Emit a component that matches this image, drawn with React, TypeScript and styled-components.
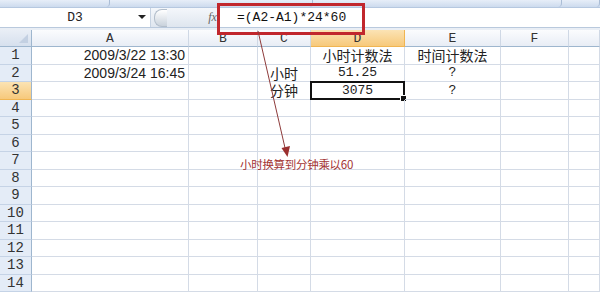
import React from "react";
import styled, { createGlobalStyle } from "styled-components";

const GlobalStyle = createGlobalStyle`
  html, body { margin: 0; padding: 0; background: #ffffff; }
  body { width: 600px; height: 292px; overflow: hidden; font-family: "Liberation Sans", "Noto Sans CJK SC", sans-serif; }
`;

const Page = styled.div`
  position: relative;
  width: 600px;
  height: 292px;
  display: flex;
  flex-direction: column;
  background: #ffffff;
  overflow: hidden;
`;

const Ribbon = styled.div`
  height: 8px;
  display: flex;
  background: linear-gradient(#e7eef8, #cddbee);
  border-bottom: 1px solid #b6c8e0;
  box-sizing: border-box;
`;

const RibbonSeg = styled.div<{ $w: number }>`
  width: ${(p) => p.$w}px;
  border-right: 1px solid #aabdd6;
  border-radius: 0 0 4px 4px;
  box-sizing: border-box;
`;

const FormulaBar = styled.div`
  height: 20px;
  display: flex;
  align-items: stretch;
  background: #ffffff;
  border-bottom: 1px solid #b9c9dd;
  box-sizing: border-box;
`;

const NameBox = styled.div`
  width: 150px;
  display: flex;
  align-items: center;
  justify-content: center;
  position: relative;
  font-family: "Liberation Mono", monospace;
  font-size: 13px;
  color: #222;
`;

const DropArrow = styled.span`
  position: absolute;
  right: 4px;
  top: 7px;
  width: 0;
  height: 0;
  border-left: 4px solid transparent;
  border-right: 4px solid transparent;
  border-top: 4px solid #222;
`;

const GripArea = styled.div`
  width: 55px;
  display: flex;
  align-items: center;
  background: linear-gradient(#f4f7fb, #dfe6ef);
  border-left: 1px solid #c7d3e2;
`;

const Grip = styled.div`
  width: 12px;
  height: 16px;
  margin-left: 3px;
  border-radius: 8px 0 0 8px;
  background: linear-gradient(#ffffff, #c9d2dc);
  border: 1px solid #b3becb;
  border-right: none;
`;

const Fx = styled.div`
  width: 13px;
  display: flex;
  align-items: center;
  justify-content: center;
  font-family: "Liberation Serif", serif;
  font-style: italic;
  font-size: 12px;
  color: #666;
  background: linear-gradient(#f4f7fb, #dfe6ef);
`;

const FormulaInput = styled.div`
  flex: 1;
  display: flex;
  align-items: center;
  padding-left: 17px;
  border-left: 1px solid #b9c9dd;
  font-family: "Liberation Mono", monospace;
  font-size: 13px;
  color: #111;
`;

const Spacer = styled.div`
  height: 2px;
  background: #e9eef5;
`;

const Sheet = styled.div`
  display: grid;
  grid-template-columns: 32px 157px 69px 53px 94px 96px 68px 31px;
  grid-template-rows: 17px repeat(14, 17.5px);
`;

const Corner = styled.div`
  position: relative;
  background: linear-gradient(#e9eef6, #d6e0ee);
  border-right: 1px solid #9eb6ce;
  border-bottom: 1px solid #9eb6ce;
  box-sizing: border-box;
  &::after {
    content: "";
    position: absolute;
    right: 3px;
    bottom: 3px;
    width: 0;
    height: 0;
    border-left: 9px solid transparent;
    border-bottom: 9px solid #c3d0e2;
  }
`;

const ColHead = styled.div<{ $active?: boolean }>`
  display: flex;
  align-items: center;
  justify-content: center;
  box-sizing: border-box;
  border-right: 1px solid ${(p) => (p.$active ? "#f0b552" : "#cfd8e5")};
  border-bottom: 1px solid ${(p) => (p.$active ? "#f0b552" : "#9eb6ce")};
  background: ${(p) =>
    p.$active
      ? "linear-gradient(#fbe3b4, #f7c97b)"
      : "linear-gradient(#fbfcfe, #e8edf5)"};
  font-family: "Liberation Mono", monospace;
  font-size: 13px;
  color: #333;
`;

const RowHead = styled.div<{ $active?: boolean }>`
  display: flex;
  align-items: center;
  justify-content: center;
  box-sizing: border-box;
  border-right: 1px solid #9eb6ce;
  border-bottom: 1px solid ${(p) => (p.$active ? "#f0b552" : "#c5d3e6")};
  background: ${(p) =>
    p.$active ? "linear-gradient(#fbe3b4, #f7c97b)" : "#e4ecf7"};
  font-family: "Liberation Mono", monospace;
  font-size: 14px;
  color: #333;
`;

const Cell = styled.div<{ $align?: "left" | "right" | "center"; $mono?: boolean; $selected?: boolean }>`
  position: relative;
  display: flex;
  align-items: center;
  justify-content: ${(p) =>
    p.$align === "right" ? "flex-end" : p.$align === "center" ? "center" : "flex-start"};
  padding: 0 3px;
  box-sizing: border-box;
  border-right: 1px solid #d4dbe6;
  border-bottom: 1px solid #d4dbe6;
  font-family: ${(p) =>
    p.$mono
      ? '"Liberation Mono", "Noto Sans CJK SC", monospace'
      : '"Liberation Sans", "Noto Sans CJK SC", sans-serif'};
  font-size: ${(p) => (p.$mono ? "13px" : "14px")};
  color: #222;
  white-space: nowrap;
  ${(p) =>
    p.$selected
      ? `
    &::before {
      content: "";
      position: absolute;
      left: -1px; top: -1px; right: -1px; bottom: -1px;
      border: 2px solid #111;
    }
    &::after {
      content: "";
      position: absolute;
      right: -3px; bottom: -3px;
      width: 5px; height: 5px;
      background: #111;
      border: 1px solid #fff;
    }
  `
      : ""}
`;

const CjkText = styled.span`
  font-family: "Noto Sans CJK SC", sans-serif;
  font-size: 14px;
  color: #222;
`;

const Highlight = styled.div`
  position: absolute;
  left: 217px;
  top: 3px;
  width: 148px;
  height: 32px;
  box-sizing: border-box;
  border: 3px solid #c1272d;
  pointer-events: none;
`;

const ArrowSvg = styled.svg`
  position: absolute;
  left: 0;
  top: 0;
  pointer-events: none;
`;

const Note = styled.div`
  position: absolute;
  left: 240px;
  top: 156px;
  font-family: "Noto Sans CJK SC", sans-serif;
  font-size: 11.5px;
  line-height: 16px;
  color: #a33434;
  white-space: nowrap;
  letter-spacing: -0.3px;
`;

type Row = (string | { t: string; cjk?: boolean; mono?: boolean; align?: "left" | "right" | "center"; selected?: boolean })[];

const cols = ["A", "B", "C", "D", "E", "F", ""];

const rows: Record<number, Row> = {
  1: [
    { t: "2009/3/22 13:30", align: "right" },
    "",
    "",
    { t: "小时计数法", cjk: true, align: "center" },
    { t: "时间计数法", cjk: true, align: "center" },
    "",
    "",
  ],
  2: [
    { t: "2009/3/24 16:45", align: "right" },
    "",
    { t: "小时", cjk: true, align: "center" },
    { t: "51.25", mono: true, align: "center" },
    { t: "?", mono: true, align: "center" },
    "",
    "",
  ],
  3: [
    "",
    "",
    { t: "分钟", cjk: true, align: "center" },
    { t: "3075", mono: true, align: "center", selected: true },
    { t: "?", mono: true, align: "center" },
    "",
    "",
  ],
};

export default function App() {
  const rowNums = Array.from({ length: 14 }, (_, i) => i + 1);
  return (
    <Page>
      <GlobalStyle />
      <Ribbon>
        <RibbonSeg $w={110} />
        <RibbonSeg $w={203} />
        <RibbonSeg $w={249} />
        <RibbonSeg $w={38} />
      </Ribbon>
      <FormulaBar>
        <NameBox>
          D3
          <DropArrow />
        </NameBox>
        <GripArea>
          <Grip />
        </GripArea>
        <Fx>fx</Fx>
        <FormulaInput>=(A2-A1)*24*60</FormulaInput>
      </FormulaBar>
      <Spacer />
      <Sheet>
        <Corner />
        {cols.map((c, i) => (
          <ColHead key={i} $active={c === "D"}>
            {c}
          </ColHead>
        ))}
        {rowNums.map((r) => {
          const data: Row = rows[r] || ["", "", "", "", "", "", ""];
          return (
            <React.Fragment key={r}>
              <RowHead $active={r === 3}>{r}</RowHead>
              {data.map((d, i) => {
                if (typeof d === "string") return <Cell key={i}>{d}</Cell>;
                return (
                  <Cell key={i} $align={d.align} $mono={d.mono} $selected={d.selected}>
                    {d.cjk ? <CjkText>{d.t}</CjkText> : d.t}
                  </Cell>
                );
              })}
            </React.Fragment>
          );
        })}
      </Sheet>
      <Highlight />
      <ArrowSvg width="600" height="292" viewBox="0 0 600 292">
        <line x1="258" y1="31" x2="285.5" y2="150" stroke="#8e3b3b" strokeWidth="1" />
        <polygon points="281.5,148 290,146 287.5,157" fill="#9a2f2f" />
      </ArrowSvg>
      <Note>小时换算到分钟乘以60</Note>
    </Page>
  );
}
